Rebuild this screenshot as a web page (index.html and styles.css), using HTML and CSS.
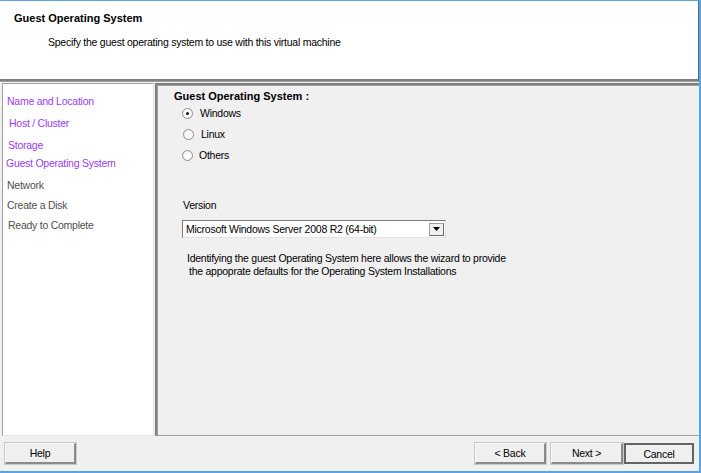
FILE: index.html
```html
<!DOCTYPE html>
<html>
<head>
<meta charset="utf-8">
<link rel="stylesheet" href="styles.css">
</head>
<body>
<div class="window">
  <div class="header">
    <div class="title">Guest Operating System</div>
    <div class="subtitle">Specify the guest operating system to use with this virtual machine</div>
  </div>
  <div class="main">
    <div class="nav">
      <div class="item visited i1">Name and Location</div>
      <div class="item visited i2">Host / Cluster</div>
      <div class="item visited i3">Storage</div>
      <div class="item visited i4">Guest Operating System</div>
      <div class="item i5">Network</div>
      <div class="item i6">Create a Disk</div>
      <div class="item i7">Ready to Complete</div>
    </div>
    <div class="content">
      <div class="group-title">Guest Operating System :</div>
      <div class="radio r1"><span class="dot checked"></span><span class="label">Windows</span></div>
      <div class="radio r2"><span class="dot"></span><span class="label l2">Linux</span></div>
      <div class="radio r3"><span class="dot"></span><span class="label l3">Others</span></div>
      <div class="version">Version</div>
      <div class="select">
        <span class="select-text">Microsoft Windows Server 2008 R2 (64-bit)</span>
        <span class="arrow"><svg width="7" height="4" viewBox="0 0 7 4"><path d="M0 0h7L3.5 4z" fill="#000"/></svg></span>
      </div>
      <div class="info">
        <div class="info1">Identifying the guest Operating System here allows the wizard to provide</div>
        <div class="info2">the appoprate defaults for the Operating System Installations</div>
      </div>
    </div>
  </div>
  <div class="footer">
    <div class="btn help">Help</div>
    <div class="spacer"></div>
    <div class="btn back">&lt; Back</div>
    <div class="btn next">Next &gt;</div>
    <div class="btn cancel">Cancel</div>
  </div>
</div>
</body>
</html>
```

FILE: styles.css
```css
html, body {
  margin: 0;
  padding: 0;
}
body {
  width: 701px;
  height: 473px;
  overflow: hidden;
  font-family: "Liberation Sans", Arial, sans-serif;
  font-size: 10.5px;
  letter-spacing: -0.25px;
  color: #000;
  background: #f0f0f0;
}
.window {
  width: 701px;
  height: 473px;
  box-sizing: border-box;
  border-top: 1px solid #5aa3e6;
  border-right: 2px solid #5aa3e6;
  border-bottom: 2px solid #5aa3e6;
  background: #f0f0f0;
  display: flex;
  flex-direction: column;
}
.header {
  background: #fff;
  border-right: 1px solid #696969;
  border-bottom: 2px solid #808080;
  box-shadow: 0 1px 0 #a0a0a0;
  box-sizing: border-box;
  height: 80px;
  flex: none;
}
.title {
  font-weight: bold;
  font-size: 11px;
  letter-spacing: 0;
  padding: 10px 0 0 14px;
  line-height: 14px;
}
.subtitle {
  padding: 10px 0 0 48px;
  line-height: 14px;
}
.main {
  display: flex;
  margin-top: 2px;
  height: 353px;
  flex: none;
}
.nav {
  width: 152px;
  margin-left: 2px;
  background: #fff;
  border: 1px solid #a0a0a0;
  border-right: 1px solid #e3e3e3;
  border-bottom: 1px solid #e3e3e3;
  box-sizing: border-box;
  padding-top: 9px;
  flex: none;
}
.item {
  line-height: 14px;
  color: #505050;
}
.visited {
  color: #9b3cf2;
}
.i1 { margin-top: 1px; padding-left: 4px; }
.i2 { margin-top: 8px; padding-left: 6px; }
.i3 { margin-top: 8px; padding-left: 5px; }
.i4 { margin-top: 4px; padding-left: 3px; }
.i5 { margin-top: 8px; padding-left: 4px; }
.i6 { margin-top: 6px; padding-left: 4px; }
.i7 { margin-top: 6px; padding-left: 5px; }
.content {
  flex: 1;
  margin-left: 1px;
  border-left: 2px solid #808080;
  border-top: 2px solid #808080;
  border-bottom: 1px solid #a0a0a0;
  box-shadow: inset 1px 1px 0 #a0a0a0;
  box-sizing: border-box;
  padding-left: 17px;
  padding-top: 4px;
}
.group-title {
  font-weight: bold;
  font-size: 11px;
  letter-spacing: 0;
  line-height: 14px;
}
.radio {
  display: flex;
  align-items: center;
  height: 14px;
  padding-left: 8px;
}
.r1 { margin-top: 3px; }
.r2 { margin-top: 7px; padding-left: 9px; }
.r3 { margin-top: 7px; }
.dot {
  width: 11px;
  height: 11px;
  border-radius: 50%;
  border: 1px solid #8e8f8f;
  box-sizing: border-box;
  background: radial-gradient(circle at 60% 60%, #ffffff 30%, #e6e6e6 100%);
  position: relative;
  flex: none;
}
.dot.checked::after {
  content: "";
  position: absolute;
  left: 3px;
  top: 3px;
  width: 3px;
  height: 3px;
  border-radius: 50%;
  background: #111;
}
.label {
  margin-left: 7px;
}
.l2 { margin-left: 7px; }
.l3 { margin-left: 6px; }
.version {
  margin-top: 36px;
  padding-left: 9px;
  line-height: 14px;
}
.select {
  margin-top: 8px;
  margin-left: 8px;
  width: 264px;
  height: 18px;
  box-sizing: border-box;
  background: #fff;
  border: 1px solid #7a7a7a;
  border-right-color: #e3e3e3;
  border-bottom-color: #e3e3e3;
  display: flex;
  align-items: center;
  justify-content: space-between;
}
.select-text {
  padding-left: 3px;
  line-height: 14px;
}
.arrow {
  width: 15px;
  height: 13px;
  margin-right: 1px;
  box-sizing: border-box;
  background: #f0f0f0;
  border: 1px solid #a0a0a0;
  border-right-color: #696969;
  border-bottom-color: #696969;
  display: flex;
  align-items: center;
  justify-content: center;
}
.info {
  margin-top: 14px;
  padding-left: 13px;
  line-height: 13px;
}
.info2 {
  padding-left: 2px;
}
.footer {
  display: flex;
  align-items: flex-start;
  padding: 7px 5px 0 5px;
  height: 37px;
  box-sizing: border-box;
  flex: none;
}
.spacer { flex: 1; }
.btn {
  height: 21px;
  box-sizing: border-box;
  background: #efefef;
  border: 1px solid #f8f8f8;
  border-right: 2px solid #8a8a8a;
  border-bottom: 2px solid #8a8a8a;
  box-shadow: 0 0 0 1px #c8c8c8;
  display: flex;
  align-items: center;
  justify-content: center;
}
.help { width: 71px; }
.back { width: 71px; }
.next { width: 72px; margin-left: 5px; }
.cancel {
  width: 70px;
  margin-left: 1px;
  border: 2px solid #646464;
  box-shadow: none;
}
```
